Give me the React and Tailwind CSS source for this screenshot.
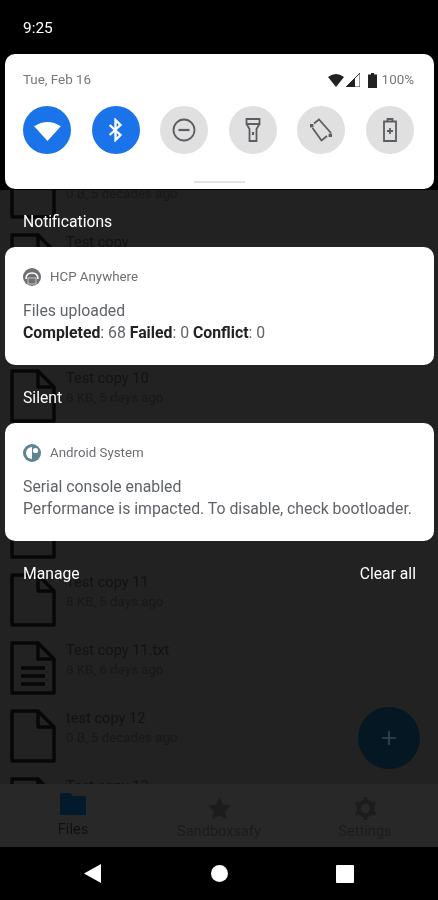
import React from "react";

const font = { fontFamily: "Roboto, sans-serif" };

function FileIcon({ lines }) {
  return (
    <svg width="46" height="54" viewBox="0 0 46 54" fill="none" stroke="#070707" strokeWidth="3.4" className="shrink-0">
      <path d="M2 2 H28 L44 18 V52 H2 Z" strokeLinejoin="round" />
      <path d="M28 2 V18 H44" strokeLinejoin="round" />
      {lines && <path d="M11 27 H35 M11 35 H35 M11 43 H35" />}
    </svg>
  );
}

function Row({ title, sub, lines }) {
  return (
    <div className="h-[68px] shrink-0 flex items-start pl-[10px]">
      <FileIcon lines={lines} />
      <div className="ml-[10px] mt-[-1px]">
        <div className="text-[14.6px] leading-[20px] text-[#121212]">{title}</div>
        <div className="text-[13.3px] leading-[18px] mt-px text-[#181818]">{sub}</div>
      </div>
    </div>
  );
}

function Circle({ on, children }) {
  return (
    <div className={"w-[48px] h-[48px] rounded-full flex items-center justify-center " + (on ? "bg-[#1a73e8]" : "bg-[#e0e0e0]")}>
      {children}
    </div>
  );
}

const gs = { fill: "none", stroke: "#5a5e62", strokeWidth: 1.8 };

function Card({ icon, app, children }) {
  return (
    <div className="h-[118px] rounded-[10px] bg-white pl-[18px] pr-[10px] pt-[21px]">
      <div className="flex items-center h-[18px]">
        {icon}
        <span className="ml-[9px] text-[13.3px] text-[#6b6e72]">{app}</span>
      </div>
      <div className="mt-[14px] text-[15.8px] leading-[22px] text-[#5f6368]">{children}</div>
    </div>
  );
}

function Label({ children }) {
  return <span className="text-[15.7px] text-white">{children}</span>;
}

export default function App() {
  const rows = [
    ["Test copy", "0 B, 5 decades ago"],
    ["Test copy", "8 KB, 5 days ago"],
    ["Test copy", "8 KB, 5 days ago"],
    ["Test copy 10", "8 KB, 5 days ago"],
    ["Test copy 10", "8 KB, 5 days ago"],
    ["Test copy 10", "8 KB, 5 days ago"],
    ["Test copy 11", "8 KB, 5 days ago"],
    ["Test copy 11.txt", "8 KB, 6 days ago", true],
    ["test copy 12", "0 B, 5 decades ago"],
    ["Test copy 13", "8 KB, 5 days ago"],
  ];
  return (
    <div style={font} className="w-[438px] h-[900px] overflow-hidden bg-black">
      <div className="relative h-[900px] blur-[0.5px]">
        {/* dimmed app behind the shade */}
        <div className="h-[190px] bg-black" />
        <div className="h-[594px] bg-[#222222] overflow-hidden">
          <div className="mt-[-25px]">
            {rows.map((r, i) => (
              <Row key={i} title={r[0]} sub={r[1]} lines={r[2]} />
            ))}
          </div>
        </div>
        <div className="h-[63px] bg-[#282828] grid grid-cols-3">
          <div className="flex flex-col items-center pt-[8px]">
            <svg width="28" height="24" viewBox="0 0 28 24"><path d="M1 3 a2 2 0 0 1 2-2 h8 l3 3 h11 a2 2 0 0 1 2 2 v16 a1 1 0 0 1-1 1 H2 a1 1 0 0 1-1-1 Z" fill="#031a2c" /></svg>
            <span className="text-[14.6px] leading-[18px] mt-[4px] text-[#101010]">Files</span>
          </div>
          <div className="flex flex-col items-center pt-[12px]">
            <svg width="25" height="25" viewBox="0 0 24 24"><path d="M12 1 l3.4 7.3 7.6.9-5.6 5.3 1.5 7.9-6.9-4-6.9 4 1.5-7.9L1 9.2l7.6-.9Z" fill="#1c1c1c" /></svg>
            <span className="text-[14.6px] leading-[18px] mt-[1px] text-[#1c1c1c]">Sandboxsafy</span>
          </div>
          <div className="flex flex-col items-center pt-[12px]">
            <svg width="25" height="25" viewBox="0 0 24 24" fill="none" stroke="#1c1c1c">
              <circle cx="12" cy="12" r="6.5" strokeWidth="4" />
              <path d="M12 1 V5 M12 19 V23 M2.5 6.5 L6 8.5 M18 15.5 L21.5 17.5 M2.5 17.5 L6 15.5 M18 8.5 L21.5 6.5" strokeWidth="3.5" />
            </svg>
            <span className="text-[14.6px] leading-[18px] mt-[1px] text-[#1c1c1c]">Settings</span>
          </div>
        </div>
        <div className="h-[53px] bg-black flex items-center justify-center">
          <div className="w-[126px] flex justify-center">
            <svg width="17" height="19" viewBox="0 0 17 19" className="mr-[2px]"><path d="M17 0 V19 L0 9.5 Z" fill="#fff" /></svg>
          </div>
          <div className="w-[126px] flex justify-center">
            <span className="w-[17px] h-[17px] rounded-full bg-white" />
          </div>
          <div className="w-[126px] flex justify-center">
            <span className="w-[18px] h-[18px] rounded-[1px] bg-white" />
          </div>
        </div>

        {/* floating action button */}
        <div className="absolute left-[358px] top-[707px] w-[62px] h-[62px] rounded-full bg-[#041722] flex items-center justify-center">
          <svg width="14" height="14" viewBox="0 0 14 14"><path d="M7 0 V14 M0 7 H14" stroke="#3a4650" strokeWidth="1.6" /></svg>
        </div>

        {/* notification shade */}
        <div className="absolute inset-0">
          <div className="h-[54px] pl-[23px] pt-[18px]">
            <span className="text-[15.4px] leading-[20px] text-white block">9:25</span>
          </div>
          <div className="ml-[5px] mr-[4px]">
            <div className="relative h-[135px] rounded-[10px] bg-white pl-[18px] pr-[20px] pt-[16px]">
              <div className="flex items-center justify-between h-[20px]">
                <span className="text-[13.4px] text-[#74777b]">Tue, Feb 16</span>
                <div className="flex items-center">
                  <svg width="16" height="14" viewBox="0 0 16 14"><path d="M0 4 Q8 -2 16 4 L8 14 Z" fill="#222" /></svg>
                  <svg width="14" height="14" viewBox="0 0 14 14" className="ml-[2px]"><path d="M0 14 L14 0 V14 Z" fill="none" stroke="#333" strokeWidth="1" /><path d="M0 14 L9 5 V14 Z" fill="#222" /></svg>
                  <svg width="9" height="15" viewBox="0 0 9 15" className="ml-[8px]"><path d="M3 0 H6 V1.5 H9 V15 H0 V1.5 H3 Z" fill="#222" /></svg>
                  <span className="ml-[5px] text-[13.4px] text-[#74777b]">100%</span>
                </div>
              </div>
              <div className="flex justify-between mt-[16px]">
                <Circle on>
                  <svg width="27" height="21" viewBox="0 0 28 22"><path d="M0 6.5 Q14 -2.5 28 6.5 L14 22 Z" fill="#fff" /></svg>
                </Circle>
                <Circle on>
                  <svg width="15" height="24" viewBox="0 0 18 26" fill="none" stroke="#fff" strokeWidth="2.8"><path d="M2 7 L15 19 L9 25 V1 L15 7 L2 19" /></svg>
                </Circle>
                <Circle>
                  <svg width="24" height="24" viewBox="0 0 24 24" {...gs}><circle cx="12" cy="12" r="10.5" /><path d="M6.5 12 H17.5" strokeWidth="2.2" /></svg>
                </Circle>
                <Circle>
                  <svg width="16" height="24" viewBox="0 0 16 24" {...gs}><path d="M1.5 1 H14.5 V6 H1.5 Z M1.5 6 L4.5 11 V23 H11.5 V11 L14.5 6" /><path d="M8 14 V17" strokeWidth="2.2" /></svg>
                </Circle>
                <Circle>
                  <svg width="24" height="24" viewBox="0 0 24 24" {...gs}>
                    <path d="M5 5.5 L10 1.5 L22 15 M3.5 10 L12.5 22.5 L18 18" />
                    <rect x="1" y="6" width="3.4" height="3.4" fill="#5a5e62" stroke="none" />
                    <rect x="19.6" y="15.6" width="3.4" height="3.4" fill="#5a5e62" stroke="none" />
                  </svg>
                </Circle>
                <Circle>
                  <svg width="14" height="24" viewBox="0 0 14 24" {...gs}><path d="M1 3.5 H13 V23 H1 Z M4.5 3 V1 H9.5 V3" /><path d="M7 10 V16 M4 13 H10" /></svg>
                </Circle>
              </div>
              <div className="absolute left-[189px] bottom-[6px] w-[51px] h-[2px] bg-[#e2e2e2]" />
            </div>

            <div className="h-[58px] pl-[18px] pt-[21px]"><Label>Notifications</Label></div>

            <Card
              app="HCP Anywhere"
              icon={
                <svg width="18" height="18" viewBox="0 0 18 18"><circle cx="9" cy="9" r="9" fill="#6e7073" /><path d="M3 11 Q3 5 9 5 Q15 5 15 11" fill="none" stroke="#fff" strokeWidth="1.6" /><rect x="5" y="10" width="8" height="6" fill="#6e7073" stroke="#fff" strokeWidth="0.6" /></svg>
              }
            >
              <div>Files uploaded</div>
              <div>
                <b className="font-bold text-[#222]">Completed</b>: 68 <b className="font-bold text-[#222]">Failed</b>: 0 <b className="font-bold text-[#222]">Conflict</b>: 0
              </div>
            </Card>

            <div className="h-[58px] pl-[18px] pt-[21px]"><Label>Silent</Label></div>

            <Card
              app="Android System"
              icon={
                <svg width="18" height="18" viewBox="0 0 18 18"><circle cx="9" cy="9" r="9" fill="#5f8494" /><path d="M9 3 A6 6 0 0 0 9 15 Z" fill="#fff" /><circle cx="12.5" cy="6.5" r="2.6" fill="#fff" /></svg>
              }
            >
              <div>Serial console enabled</div>
              <div className="whitespace-nowrap">Performance is impacted. To disable, check bootloader.</div>
            </Card>

            <div className="flex justify-between h-[64px] pl-[18px] pr-[18px] pt-[21px]">
              <Label>Manage</Label>
              <Label>Clear all</Label>
            </div>
          </div>
        </div>
      </div>
    </div>
  );
}
